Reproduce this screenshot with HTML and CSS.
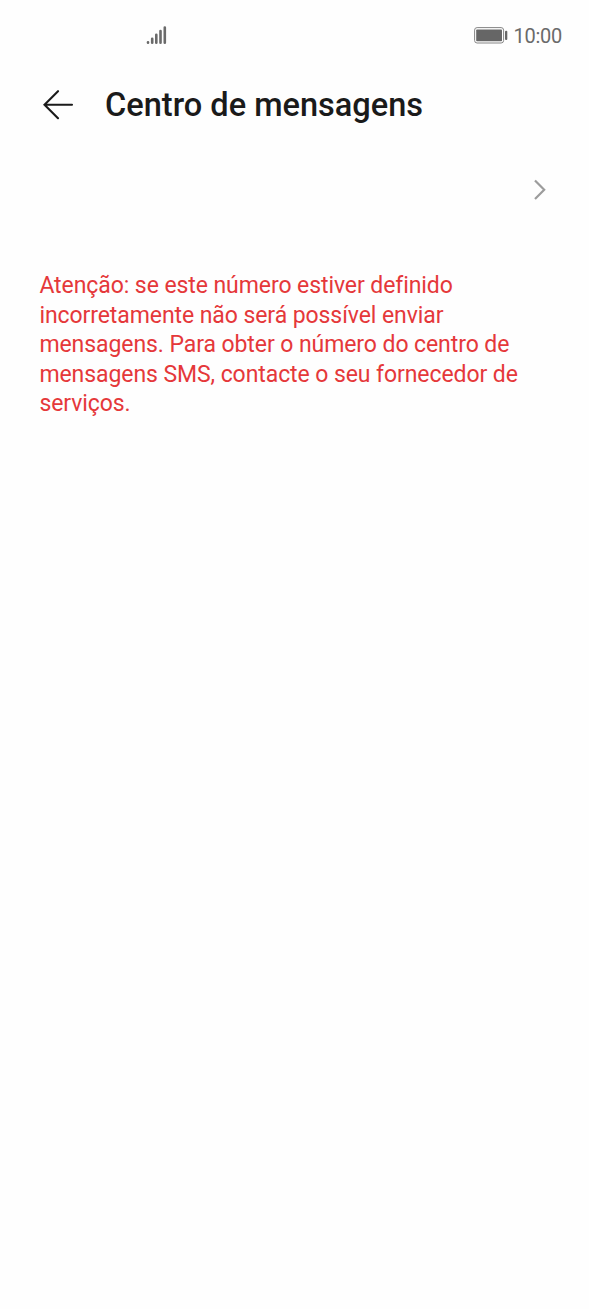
FILE: index.html
```html
<!DOCTYPE html>
<html lang="pt">
<head>
    <meta charset="UTF-8">
    <meta name="viewport" content="width=device-width, initial-scale=1.0">
    <title>Centro de mensagens</title>
    <link rel="stylesheet" href="styles.css">
</head>
<body>
    <div class="status-bar">
        <svg class="signal" width="21" height="20" viewBox="0 0 21 20">
            <path d="M2 17.2v.6M6.2 13.7v4.1M10.3 9.7v8.1M14.5 6v11.8M18.8 2.6v15.2" />
        </svg>
        <div class="status-right">
            <svg class="battery" width="34" height="17" viewBox="0 0 34 17">
                <rect class="battery-case" x="0.6" y="0.6" width="29" height="15.4" rx="2.5" />
                <rect class="battery-level" x="2.2" y="2.4" width="25.8" height="11.8" rx="0.8" />
                <rect class="battery-level" x="31" y="3.7" width="2.3" height="9.2" rx="1" />
            </svg>
            <span class="time">10:00</span>
        </div>
    </div>

    <header>
        <svg class="back" width="31" height="30" viewBox="0 0 31 30">
            <path d="M29 14.7H1.5M15 1.2L1.5 14.7 15 28.2" />
        </svg>
        <h1>Centro de mensagens</h1>
    </header>

    <main>
        <!-- Message centre number, empty until it is set -->
        <div class="number-row">
            <svg class="chevron" width="13" height="22" viewBox="0 0 13 22">
                <path d="M2 1.5L11.2 10.8 2 20.1" />
            </svg>
        </div>
        <p class="warning">Atenção: se este número estiver definido incorretamente não será possível enviar mensagens. Para obter o número do centro de mensagens SMS, contacte o seu fornecedor de serviços.</p>
    </main>
</body>
</html>
```
FILE: styles.css
```css
body {
    font-family: Roboto, sans-serif;
    background-color: #fefefe;
    margin: 0;
    min-height: 1309px;
}

.status-bar {
    display: flex;
    justify-content: space-between;
    align-items: center;
    height: 72px;
    padding: 0 27px 0 146px;
    box-sizing: border-box;
}

.signal {
    fill: none;
    stroke: #6a6a6a;
    stroke-width: 2.6;
    stroke-linecap: round;
    margin-bottom: 2px;
}

.status-right {
    display: flex;
    align-items: center;
    gap: 5px;
}

.battery {
    margin-bottom: 1px;
}

.battery-case {
    fill: none;
    stroke: #858585;
}

.battery-level {
    fill: #666;
}

.time {
    font-size: 20px;
    letter-spacing: -0.25px;
    color: #6a6a6a;
}

header {
    display: flex;
    align-items: center;
    height: 66px;
    padding-left: 43px;
    gap: 31px;
}

.back {
    fill: none;
    stroke: #1a1a1a;
    stroke-width: 2.1;
    stroke-linecap: round;
}

h1 {
    font-size: 32.55px;
    font-weight: 500;
    color: #1a1a1a;
    margin: 0;
}

.number-row {
    display: flex;
    justify-content: flex-end;
    align-items: center;
    height: 103px;
    padding-right: 43px;
}

.chevron {
    fill: none;
    stroke: #9c9c9c;
    stroke-width: 2.2;
}

.warning {
    width: 500px;
    margin: 30px 0 0 39.4px;
    font-size: 23px;
    font-variant-ligatures: common-ligatures;
    letter-spacing: -0.08px;
    line-height: 29.6px;
    color: #e5383a;
}
```
